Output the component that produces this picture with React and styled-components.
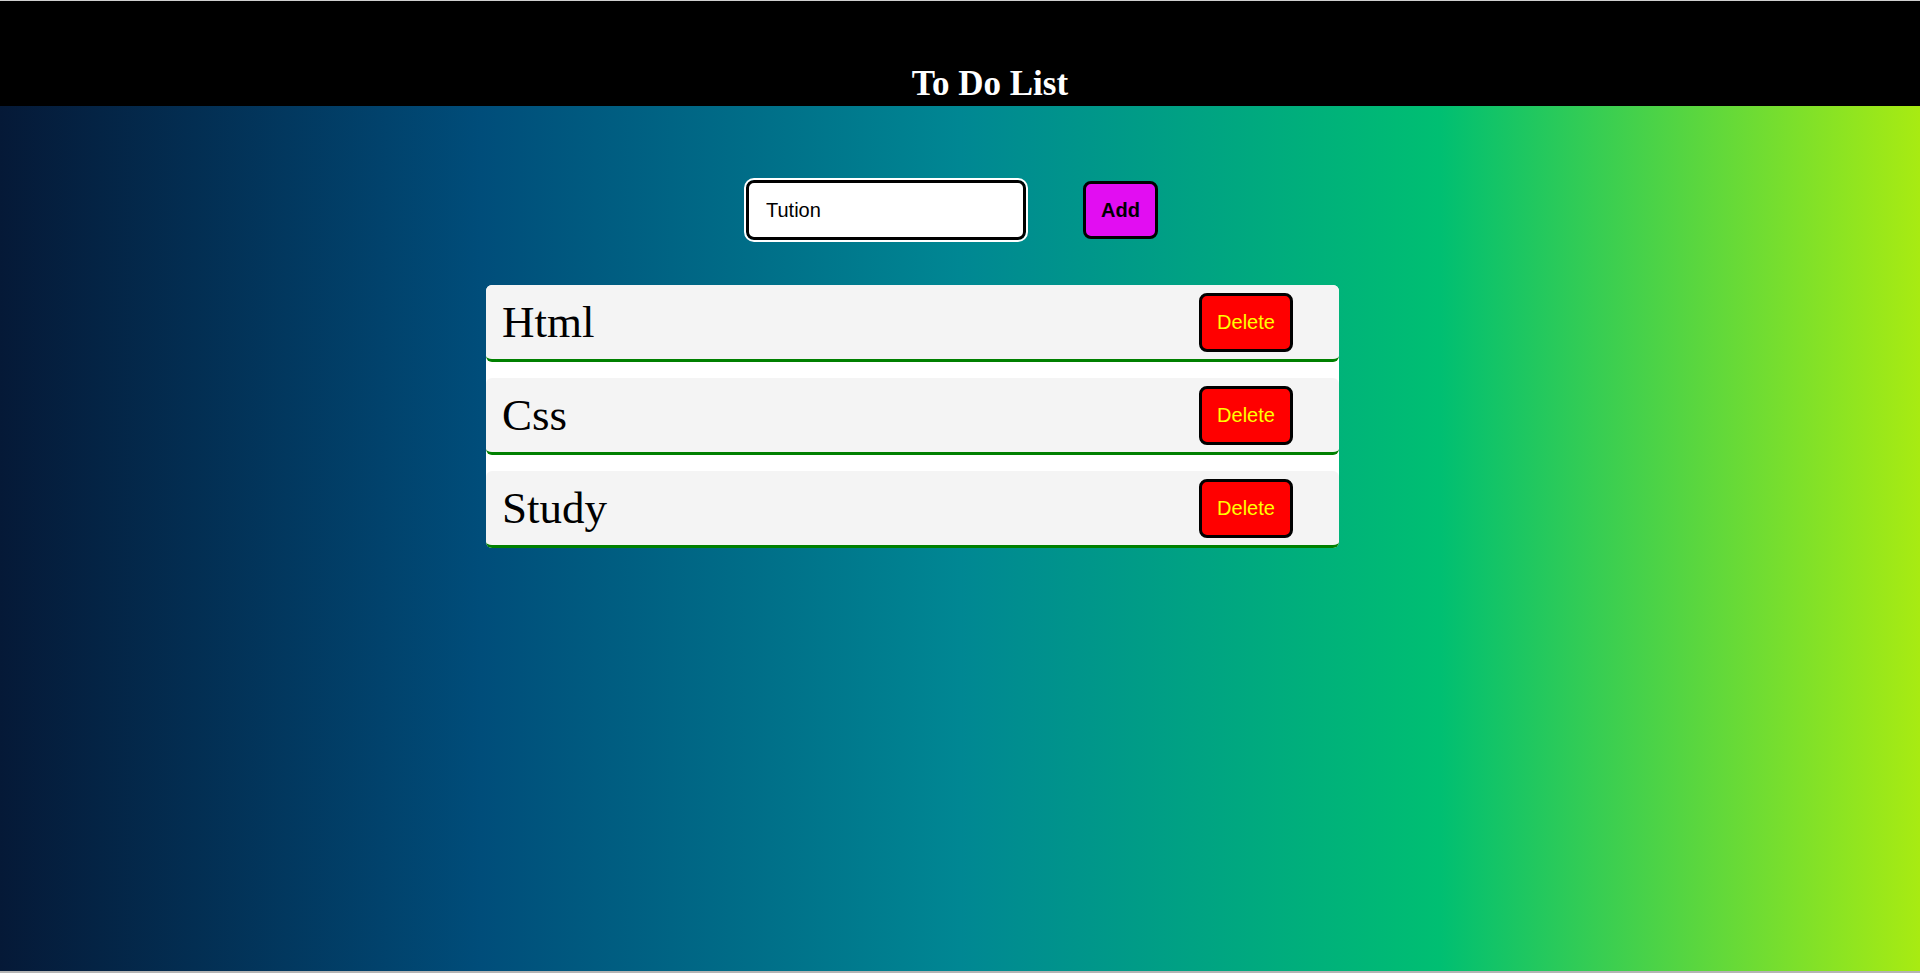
import React, { useState } from "react";
import styled, { createGlobalStyle } from "styled-components";

const GlobalStyle = createGlobalStyle`
  * {
    box-sizing: border-box;
  }
  html, body {
    margin: 0;
    padding: 0;
  }
  body {
    font-family: "Liberation Serif", "Times New Roman", serif;
  }
`;

const Page = styled.div`
  min-height: 973px;
  display: flex;
  flex-direction: column;
  background: linear-gradient(to right, #051937, #004d7a, #008793, #00bf72, #a8eb12);
  border-top: 1px solid #cfcfcf;
  border-bottom: 2px solid #b4b4b4;
`;

const Header = styled.header`
  height: 105px;
  background-color: #000;
  display: flex;
  align-items: flex-end;
  justify-content: center;
  padding: 0 0 2px 60px;

  h1 {
    margin: 0;
    color: #fff;
    font-size: 35px;
    font-weight: bold;
    font-family: "Liberation Serif", "Times New Roman", serif;
  }
`;

const Form = styled.form`
  display: flex;
  align-items: center;
  justify-content: center;
  gap: 57px;
  margin: 74px 16px 0 0;
`;

const Input = styled.input`
  width: 280px;
  height: 60px;
  border: 3px solid #000;
  border-radius: 8px;
  background: #fff;
  padding: 0 17px;
  font-size: 20px;
  font-family: "Liberation Sans", Arial, sans-serif;
  color: #000;

  &:focus {
    outline: 2px solid #fff;
    outline-offset: 0;
  }
`;

const AddButton = styled.button`
  width: 75px;
  height: 58px;
  border: 3px solid #000;
  border-radius: 8px;
  background-color: #e20df2;
  color: #000;
  font-size: 20px;
  font-weight: bold;
  font-family: "Liberation Sans", Arial, sans-serif;
  cursor: pointer;
`;

const List = styled.ul`
  list-style: none;
  width: 853px;
  margin: 45px 0 0 calc(50% - 474px);
  padding: 0;
  display: flex;
  flex-direction: column;
  gap: 16px;
  background-color: #fff;
  border-radius: 6px;
`;

const Item = styled.li`
  height: 77px;
  display: flex;
  align-items: center;
  justify-content: space-between;
  padding: 0 46px 0 16px;
  background-color: #f4f4f4;
  border-radius: 6px;
  border-bottom: 3px solid #008000;
  font-size: 45px;
  color: #000;
`;

const DeleteButton = styled.button`
  width: 94px;
  height: 59px;
  border: 3px solid #000;
  border-radius: 8px;
  background-color: #ff0000;
  color: #ffff00;
  font-size: 20px;
  font-family: "Liberation Sans", Arial, sans-serif;
  cursor: pointer;
`;

export default function App() {
  const [title, setTitle] = useState("Tution");
  const [todos, setTodos] = useState([
    { id: 1, text: "Html" },
    { id: 2, text: "Css" },
    { id: 3, text: "Study" },
  ]);

  const handleAdd = (e) => {
    e.preventDefault();
    if (!title.trim()) return;
    setTodos((prev) => [...prev, { id: Date.now(), text: title }]);
    setTitle("");
  };

  const handleDelete = (id) => {
    setTodos((prev) => prev.filter((todo) => todo.id !== id));
  };

  return (
    <>
      <GlobalStyle />
      <Page>
        <Header>
          <h1>To Do List</h1>
        </Header>
        <Form onSubmit={handleAdd}>
          <Input
            type="text"
            value={title}
            autoFocus
            onChange={(e) => setTitle(e.target.value)}
          />
          <AddButton type="submit">Add</AddButton>
        </Form>
        <List>
          {todos.map((todo) => (
            <Item key={todo.id}>
              {todo.text}
              <DeleteButton type="button" onClick={() => handleDelete(todo.id)}>
                Delete
              </DeleteButton>
            </Item>
          ))}
        </List>
      </Page>
    </>
  );
}
